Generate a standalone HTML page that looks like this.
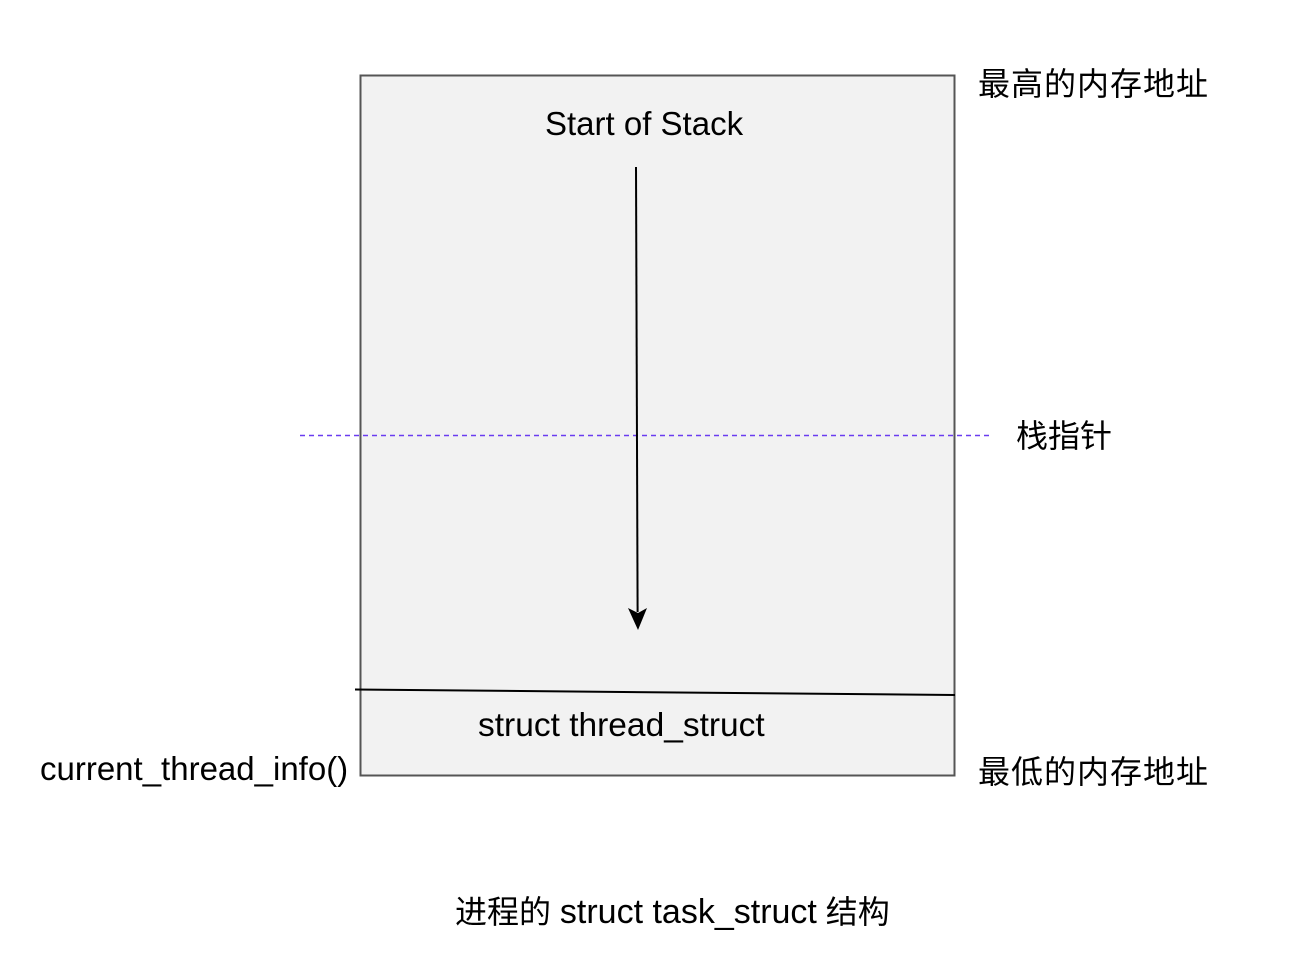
<!DOCTYPE html>
<html><head><meta charset="utf-8"><style>
body{margin:0;width:1316px;height:954px;background:#fff;position:relative;overflow:hidden;font-family:"Liberation Sans","Noto Sans CJK SC",sans-serif;color:#000}
.t{position:absolute;white-space:nowrap;line-height:1}
</style></head><body>
<svg width="1316" height="954" style="position:absolute;left:0;top:0">
<rect x="360.5" y="75.5" width="594" height="700" fill="#f2f2f2" stroke="#555" stroke-width="2"/>
<line x1="355" y1="689.5" x2="955" y2="695" stroke="#000" stroke-width="2"/>
<line x1="300" y1="435.5" x2="990" y2="435.5" stroke="#6a3cf0" stroke-width="1.5" stroke-dasharray="5,4"/>
<line x1="636" y1="167" x2="637.6" y2="612" stroke="#000" stroke-width="2"/>
<path d="M628,608 L638,630 L647,608 L638,613 Z" fill="#000"/>
</svg>
<div class="t" style="left:545px;top:107px;font-size:33px">Start of Stack</div>
<div class="t" style="left:978px;top:68px;font-size:32px;letter-spacing:1px">最高的内存地址</div>
<div class="t" style="left:1016px;top:420px;font-size:32px">栈指针</div>
<div class="t" style="left:478px;top:709px;font-size:33.5px">struct thread_struct</div>
<div class="t" style="left:40px;top:752px;font-size:33px">current_thread_info()</div>
<div class="t" style="left:978px;top:756px;font-size:32px;letter-spacing:1px">最低的内存地址</div>
<div class="t" style="left:455px;top:895px;font-size:32px">进程的 <span style="font-size:34px">struct task_struct</span> 结构</div>
</body></html>
